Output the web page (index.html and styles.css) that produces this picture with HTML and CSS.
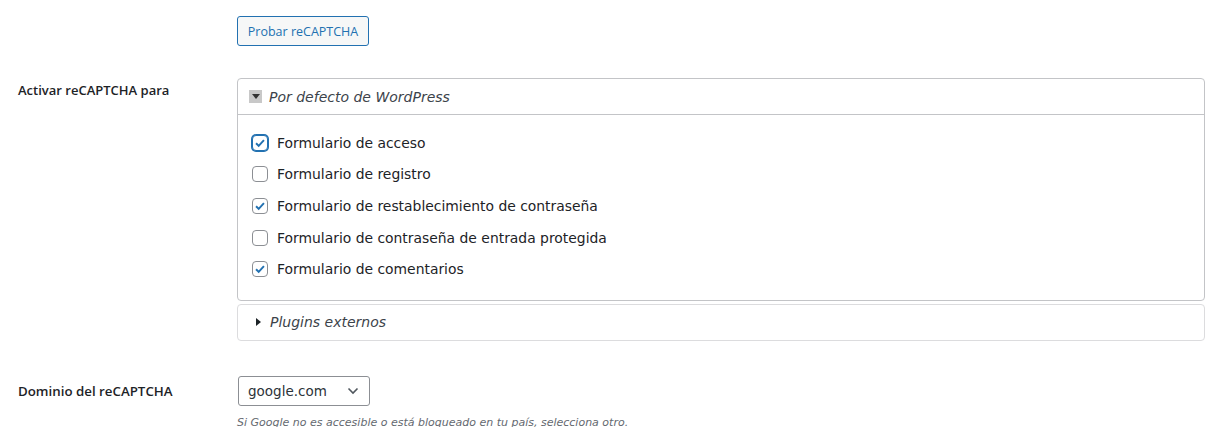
FILE: index.html
```html
<!DOCTYPE html>
<html lang="es">
<head>
<meta charset="utf-8">
<link rel="stylesheet" href="styles.css">
</head>
<body>
<div class="form">
  <div class="row row-btn">
    <div class="th"></div>
    <div class="td"><button class="btn">Probar reCAPTCHA</button></div>
  </div>
  <div class="row row-forms">
    <div class="th">Activar reCAPTCHA para</div>
    <div class="td">
      <div class="panel">
        <div class="panel-head">
          <span class="toggle"><svg width="8" height="5" viewBox="0 0 8 5"><path d="M0 0h8L4 5z" fill="#333"/></svg></span>
          <span class="head-title">Por defecto de WordPress</span>
        </div>
        <div class="panel-body">
          <label class="check"><span class="box checked focus"><svg viewBox="0 0 16 16"><path d="M3.5 8.3l3 3 6-6.6" fill="none" stroke="#2271b1" stroke-width="2.2"/></svg></span>Formulario de acceso</label>
          <label class="check"><span class="box"></span>Formulario de registro</label>
          <label class="check"><span class="box checked"><svg viewBox="0 0 16 16"><path d="M3.5 8.3l3 3 6-6.6" fill="none" stroke="#2271b1" stroke-width="2.2"/></svg></span>Formulario de restablecimiento de contraseña</label>
          <label class="check"><span class="box"></span>Formulario de contraseña de entrada protegida</label>
          <label class="check"><span class="box checked"><svg viewBox="0 0 16 16"><path d="M3.5 8.3l3 3 6-6.6" fill="none" stroke="#2271b1" stroke-width="2.2"/></svg></span>Formulario de comentarios</label>
        </div>
      </div>
      <div class="panel panel-closed">
        <div class="panel-head closed">
          <span class="arrow"><svg width="5" height="8" viewBox="0 0 5 8"><path d="M0 0v8l5-4z" fill="#1d2327"/></svg></span>
          <span class="head-title">Plugins externos</span>
        </div>
      </div>
    </div>
  </div>
  <div class="row row-domain">
    <div class="th">Dominio del reCAPTCHA</div>
    <div class="td">
      <div class="select">google.com<svg width="12" height="8" viewBox="0 0 12 8"><path d="M1.5 1.5l4.5 4.5 4.5-4.5" fill="none" stroke="#50575e" stroke-width="1.6"/></svg></div>
      <p class="desc">Si Google no es accesible o está bloqueado en tu país, selecciona otro.</p>
    </div>
  </div>
</div>
</body>
</html>
```
FILE: styles.css
```css
html, body {
  margin: 0;
  padding: 0;
  background: #fff;
  color: #1d2327;
  font-family: "Segoe UI", "Open Sans", "Liberation Sans", sans-serif;
  font-size: 13px;
}
.form {
  display: flex;
  flex-direction: column;
}
.row {
  display: flex;
}
.th {
  width: 219px;
  padding-left: 18px;
  font-weight: 600;
  font-size: 13px;
  flex-shrink: 0;
}
.td {
  flex: 1;
  padding-right: 19px;
}
.row-btn {
  padding-top: 16px;
}
.btn {
  display: block;
  box-sizing: border-box;
  height: 30px;
  width: 132px;
  padding: 0;
  border: 1px solid #2271b1;
  border-radius: 3px;
  background: #f6f7f7;
  color: #2271b1;
  font-family: "Segoe UI", "Open Sans", "Liberation Sans", sans-serif;
  font-size: 12.5px;
  white-space: nowrap;
  text-align: center;
}
.row-forms {
  margin-top: 32px;
}
.row-forms .th {
  padding-top: 4px;
  line-height: 17px;
}
.panel {
  border: 1px solid #c3c4c7;
  border-radius: 4px;
  font-family: "DejaVu Sans", Verdana, sans-serif;
}
.panel-head {
  height: 35px;
  display: flex;
  align-items: center;
  border-bottom: 1px solid #c3c4c7;
  padding-left: 11px;
}
.panel-head.closed {
  border-bottom: 0;
  height: 35px;
  padding-left: 18px;
}
.toggle {
  width: 13px;
  height: 13px;
  background: #c8c8c8;
  display: flex;
  align-items: center;
  justify-content: center;
  margin-right: 7px;
}
.arrow {
  display: flex;
  margin-right: 9px;
}
.head-title {
  font-style: italic;
  font-size: 14px;
  color: #3c434a;
}
.panel-body {
  padding: 12px 14px 15px;
  display: flex;
  flex-direction: column;
}
.check {
  display: flex;
  align-items: center;
  height: 31.6px;
  font-size: 13.9px;
  color: #1d2327;
}
.box {
  width: 14px;
  height: 14px;
  border: 1px solid #8c8f94;
  border-radius: 4px;
  margin-right: 9px;
  display: flex;
  align-items: center;
  justify-content: center;
  background: #fff;
  flex-shrink: 0;
}
.box svg {
  width: 16px;
  height: 16px;
}
.box.focus {
  border-color: #2271b1;
  box-shadow: 0 0 0 1px #2271b1;
}
.panel-closed {
  margin-top: 3px;
  border-color: #dcdcde;
}
.row-domain {
  margin-top: 35px;
}
.row-domain .th {
  padding-top: 6px;
  font-size: 13.3px;
}
.select {
  width: 111px;
  height: 28px;
  border: 1px solid #8c8f94;
  border-radius: 3px;
  display: flex;
  align-items: center;
  justify-content: space-between;
  padding: 0 10px 0 9px;
  font-family: "DejaVu Sans", Verdana, sans-serif;
  font-size: 13.5px;
  color: #2c3338;
  margin-left: 1px;
}
.desc {
  margin: 10px 0 0;
  font-family: "DejaVu Sans", Verdana, sans-serif;
  font-style: italic;
  font-size: 11px;
  color: #646970;
}
```
